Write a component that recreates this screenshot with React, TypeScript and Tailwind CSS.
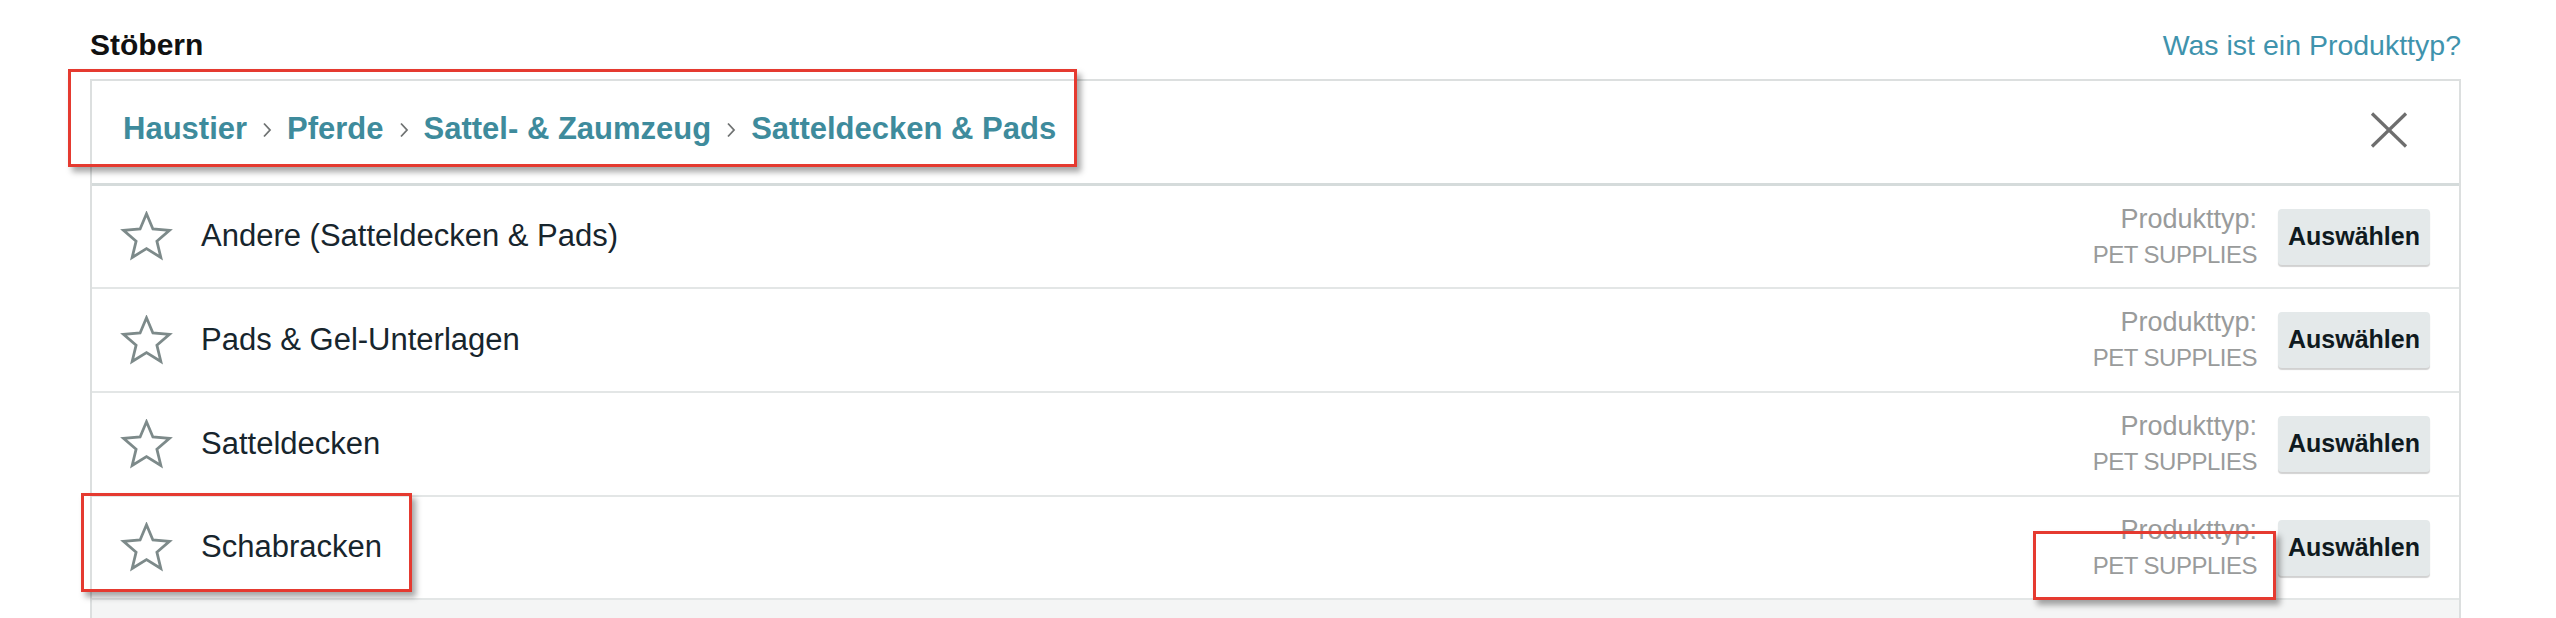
import React from "react";

const font = { fontFamily: '"Liberation Sans", Arial, sans-serif' };

function Star() {
  return (
    <svg width="53" height="51" viewBox="0 0 24 23" className="shrink-0">
      <polygon
        points="12,1.2 14.9,8.1 22.4,8.7 16.7,13.6 18.5,21 12,17 5.5,21 7.3,13.6 1.6,8.7 9.1,8.1"
        fill="none"
        stroke="#7d8a8a"
        strokeWidth="1.25"
        strokeLinejoin="miter"
      />
    </svg>
  );
}

function Chevron() {
  return (
    <svg width="10" height="16" viewBox="0 0 10 16" className="shrink-0">
      <polyline points="2,1.5 8,8 2,14.5" fill="none" stroke="#6f7272" strokeWidth="1.8" />
    </svg>
  );
}

const rows = [
  { t: "Andere (Satteldecken & Pads)", h: "h-[103px]" },
  { t: "Pads & Gel-Unterlagen", h: "h-[104px]" },
  { t: "Satteldecken", h: "h-[104px]" },
  { t: "Schabracken", h: "h-[103px]" },
];

export default function App() {
  return (
    <div className="relative h-[618px] w-[2556px] overflow-hidden bg-white" style={font}>
      <div className="pl-[90px] pr-[95px] pt-[27px]">
        <div className="flex items-baseline justify-between mb-[16px]">
          <div className="text-[30px] leading-[36px] font-bold text-[#111111]">Stöbern</div>
          <div className="text-[28.5px] leading-[36px] text-[#3f93ad]">Was ist ein Produkttyp?</div>
        </div>
        <div className="border-2 border-b-0 border-[#dcdfdf]">
          <div className="flex h-[105px] items-center justify-between border-b-[3px] border-[#d5dbdb] pb-[5px] pl-[31px] pr-[51px]">
            <div className="flex items-center gap-[15px] text-[31px] font-bold text-[#3e8b9c]">
              <span>Haustier</span>
              <Chevron />
              <span>Pferde</span>
              <Chevron />
              <span>Sattel- &amp; Zaumzeug</span>
              <Chevron />
              <span>Satteldecken &amp; Pads</span>
            </div>
            <svg width="38" height="36" viewBox="0 0 38 36">
              <line x1="2" y1="1.5" x2="36" y2="34.5" stroke="#6e6e6e" strokeWidth="3.2" />
              <line x1="36" y1="1.5" x2="2" y2="34.5" stroke="#6e6e6e" strokeWidth="3.2" />
            </svg>
          </div>
          {rows.map((r) => (
            <div
              key={r.t}
              className={`flex ${r.h} items-center justify-between border-b-2 border-[#e3e6e6] pl-[28px] pr-[29px]`}
            >
              <div className="flex items-center gap-[28px]">
                <Star />
                <span className="text-[31px] text-[#17252d]">{r.t}</span>
              </div>
              <div className="flex items-center gap-[21px]">
                <div className="flex flex-col items-end text-[#999b9b]">
                  <span className="text-[27px] leading-[35px]">Produkttyp:</span>
                  <span className="text-[24px] leading-[35px] tracking-[-0.5px]">PET SUPPLIES</span>
                </div>
                <button className="flex h-[56px] w-[152px] items-center justify-center rounded-[4px] bg-[#e4e9ea] text-[25px] font-bold text-[#0f1a20] shadow-[0_2px_1px_rgba(0,0,0,0.18)]">
                  Auswählen
                </button>
              </div>
            </div>
          ))}
          <div className="h-[40px] bg-[#f4f5f5]" />
        </div>
      </div>

      <div className="absolute left-[68px] top-[69px] h-[98px] w-[1009px] border-[3px] border-[#e53a30] shadow-[4px_5px_6px_rgba(0,0,0,0.35)]" />
      <div className="absolute left-[81px] top-[493px] h-[99px] w-[331px] border-[3px] border-[#e53a30] shadow-[4px_5px_6px_rgba(0,0,0,0.35)]" />
      <div className="absolute left-[2033px] top-[531px] h-[69px] w-[243px] border-[3px] border-[#e53a30] shadow-[4px_5px_6px_rgba(0,0,0,0.35)]" />
    </div>
  );
}
